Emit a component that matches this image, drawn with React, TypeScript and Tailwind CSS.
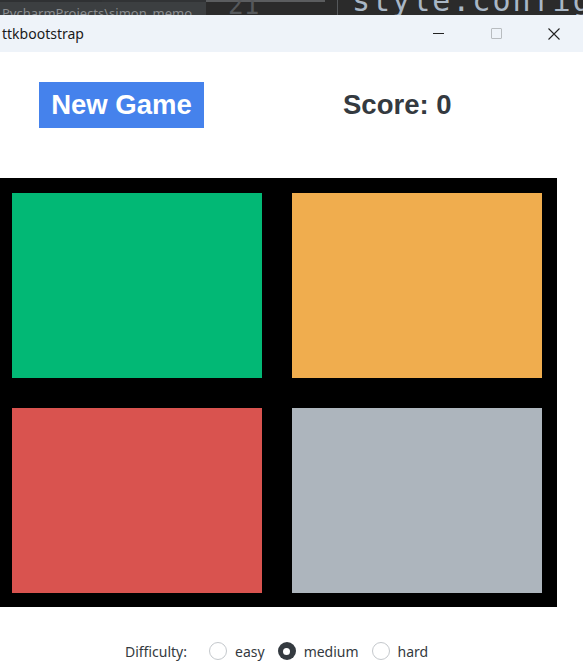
import React from "react";

export default function App() {
  return (
    <div className="w-[583px] h-[672px] overflow-hidden bg-white flex flex-col">
      {/* background IDE strip */}
      <div className="h-[15px] flex overflow-hidden relative shrink-0">
        <div className="w-[206px] h-full bg-[#3c3f41] relative overflow-hidden">
          <div className="absolute left-0 top-0 w-[102px] h-[2px] bg-[#2f3133]" />
          <div className="absolute left-[102px] top-0 w-[104px] h-[2px] bg-[#313335]" />
          <div className="absolute left-[2px] top-[7px] text-[13px] leading-[13px] text-[#8a8d90] whitespace-nowrap [font-family:'Noto_Sans',sans-serif]">
            PycharmProjects\simon_memo
          </div>
        </div>
        <div className="flex-1 h-full bg-[#2b2b2b] relative overflow-hidden">
          <div className="absolute left-0 top-0 w-[119px] h-[2px] bg-[#5b5d5f]" />
          <div className="absolute left-[22px] top-[-8px] text-[26px] leading-[26px] text-[#55585b] [font-family:'DejaVu_Sans_Mono',monospace]">
            21
          </div>
          <div className="absolute left-[131px] top-0 w-[1px] h-full bg-[#55585b]" />
          <div className="absolute left-[146px] top-[-14px] text-[30px] leading-[30px] text-[#a9b7c6] whitespace-nowrap tracking-[2px] [font-family:'DejaVu_Sans_Mono',monospace]">
            style.configu
          </div>
        </div>
      </div>
      {/* title bar */}
      <div className="h-[37px] bg-[#eef3f9] flex items-center shrink-0 relative">
        <div className="pl-[2px] text-[14px] text-[#1a1a1a] [font-family:'Noto_Sans',sans-serif]">ttkbootstrap</div>
        <div className="ml-auto flex items-center h-full">
          <div className="w-[58px] h-full flex items-center justify-center">
            <div className="w-[11px] h-[1px] bg-[#222]" />
          </div>
          <div className="w-[58px] h-full flex items-center justify-center">
            <div className="w-[11px] h-[11px] border border-[#b8bcc0] rounded-[1px]" />
          </div>
          <div className="w-[58px] h-full flex items-center justify-center">
            <svg width="14" height="14" viewBox="0 0 14 14">
              <path d="M1.5 1.5 L12.5 12.5 M12.5 1.5 L1.5 12.5" stroke="#222" strokeWidth="1.1" />
            </svg>
          </div>
        </div>
      </div>
      {/* content */}
      <div className="flex-1 flex flex-col bg-white">
        <div className="flex pt-[30px] h-[126px] items-start">
          <div className="ml-[39px] w-[165px] h-[46px] bg-[#4582ec] flex items-center justify-center text-white font-bold text-[27.5px] [font-family:'Liberation_Sans',Arial,sans-serif]">
            New Game
          </div>
          <div className="ml-[139px] h-[46px] flex items-center text-[#343a40] font-bold text-[27.5px] [font-family:'Liberation_Sans',Arial,sans-serif]">
            Score: 0
          </div>
        </div>
        <div className="w-[557px] h-[429px] bg-black pl-[12px] pt-[15px] grid grid-cols-[250px_250px] grid-rows-[185px_185px] gap-[30px]">
          <div className="bg-[#02b875]" />
          <div className="bg-[#f0ad4e]" />
          <div className="bg-[#d9534f]" />
          <div className="bg-[#adb5bd]" />
        </div>
        <div className="mt-[30px] flex items-center h-[28px] pl-[125px] text-[14px] text-[#343a40] [font-family:'Noto_Sans',sans-serif]">
          <span className="mr-[22px]">Difficulty:</span>
          <div className="w-[18px] h-[18px] rounded-full border border-[#c4c8cc] mr-[8px]" />
          <span className="mr-[13px]">easy</span>
          <div className="w-[18px] h-[18px] rounded-full bg-[#343a40] flex items-center justify-center mr-[8px]">
            <div className="w-[7px] h-[7px] rounded-full bg-white" />
          </div>
          <span className="mr-[13px]">medium</span>
          <div className="w-[18px] h-[18px] rounded-full border border-[#c4c8cc] mr-[8px]" />
          <span>hard</span>
        </div>
      </div>
    </div>
  );
}
